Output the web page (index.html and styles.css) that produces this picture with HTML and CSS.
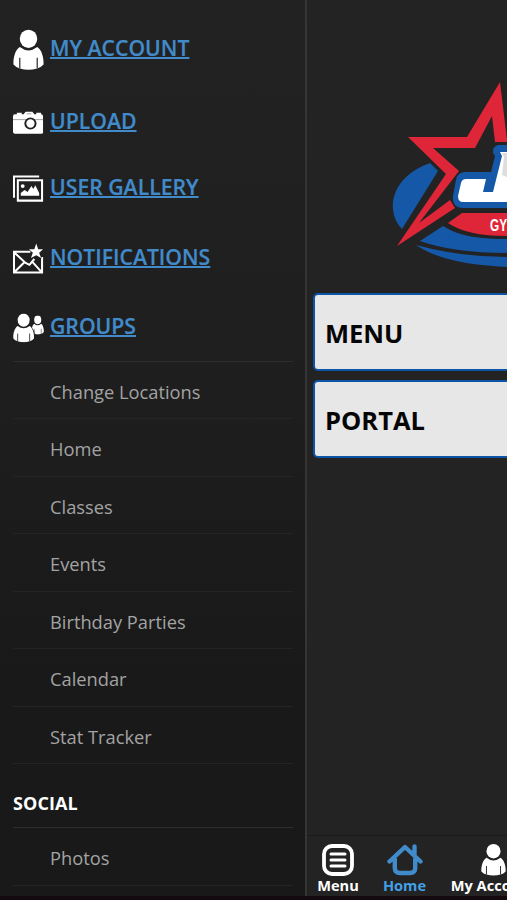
FILE: index.html
```html
<!DOCTYPE html>
<html lang="en">
<head>
<meta charset="utf-8">
<title>Menu</title>
<link rel="stylesheet" href="styles.css">
</head>
<body>
<svg class="defs" width="0" height="0">
  <symbol id="person" viewBox="0 0 32 42">
    <ellipse cx="16" cy="9.5" rx="9" ry="9.5"/>
    <path d="M7 18Q16 25 25 18C30 21 32 30 31.500 36Q29 39 25 40Q16 43 7 40Q3 39 .5 36C0 30 2 21 7 18Z"/>
    <path class="cut" d="M7 29V40M25 29V40"/>
  </symbol>
</svg>
<div class="app">
  <aside class="sidebar">
    <nav class="primary">
      <a class="item account" href="#"><svg class="icon" width="32" height="42"><use href="#person"/></svg><span>MY ACCOUNT</span></a>
      <a class="item upload" href="#"><svg class="icon" width="32" height="24" viewBox="0 0 32 24"><path d="M2 3H4V1.500H9V3H11L13 .5H20L22 3H24V1.500H29V3Q31 3 31 5V22Q31 23 29 23H2Q0 23 0 21V5Q0 3 2 3Z"/><path class="cut thin" d="M0 8.500H31M14 2.500H19"/><circle class="ring" cx="18" cy="12.500" r="5.300"/></svg><span>UPLOAD</span></a>
      <a class="item gallery" href="#"><svg class="icon" width="32" height="28" viewBox="0 0 32 28"><path class="line" d="M27 1H1V23M5 5H30V26H5Z"/><circle cx="10" cy="11" r="2"/><path d="M8 21V18L12 15L15 17L19 11L21 14L23 10L27 18V21Z"/></svg><span>USER GALLERY</span></a>
      <a class="item notes" href="#"><svg class="icon" width="32" height="32" viewBox="0 0 32 32"><path class="line" d="M18 8.500H1V30H30V14M1 9L13 20L17 22L22 16M1 30L12 19M30 30L20 19"/><path class="star" d="M24 0L26 6H31L27 9.500L29 15L24 12L18.500 15L20.500 9.500L16.500 6H22Z"/></svg><span>NOTIFICATIONS</span></a>
      <a class="item groups" href="#"><svg class="icon" width="32" height="31" viewBox="0 0 32 31"><svg x="19" y="2" width="13" height="20" viewBox="0 0 32 42" preserveAspectRatio="none"><use href="#person" width="32" height="42"/></svg><circle class="hole" cx="11" cy="8" r="8"/><path class="hole" d="M5 13H17Q23 15 23 28H5Z"/><svg x="0" y="0" width="22" height="30" viewBox="0 0 32 42" preserveAspectRatio="none"><use href="#person" width="32" height="42"/></svg></svg><span>GROUPS</span></a>
    </nav>
    <ul class="list">
      <li>Change Locations</li>
      <li>Home</li>
      <li>Classes</li>
      <li>Events</li>
      <li>Birthday Parties</li>
      <li>Calendar</li>
      <li>Stat Tracker</li>
    </ul>
    <h2>SOCIAL</h2>
    <ul class="list"><li>Photos</li></ul>
  </aside>
  <main class="page">
    <header class="brand">
      <svg width="127" height="210" viewBox="380 70 127 210">
        <path class="blue" d="M430 163L438 171L402 229C386 213 388 178 430 163Z"/>
        <path class="blue" d="M420 241L443 226C460 237 482 239 507 239V253Q454 253 420 241Z"/>
        <path class="blue" d="M416 245Q460 257 507 257V267Q443 264 416 245Z"/>
        <path class="red" d="M448 223L462 213H507V236Q467 236 448 223Z"/>
        <path class="red" d="M408 137H467L500 82L507 140V142H495L492 116L475 148H433L459 171L419 223L450 200L455 208L397 246L446 174Z"/>
        <path class="blue" d="M507 145H498Q492 147 493 153L495 156L491 172H464Q457 173 456 180L453 196Q452 208 463 208H507Z"/>
        <path class="white" d="M507 152H500L502 156L493 192H483L486 179H466Q462 179 461 183L458 196Q458 202 463 202H507Z"/>
        <path class="silver" d="M507 153H502L504 157L502 175L507 177Z"/>
        <text x="490" y="230.500" textLength="17" lengthAdjust="spacingAndGlyphs">GY</text>
      </svg>
    </header>
    <div class="buttons">
      <a href="#">MENU</a>
      <a href="#">PORTAL</a>
    </div>
    <footer class="tabs">
      <a class="tab" href="#"><svg width="32" height="32" viewBox="0 0 32 32"><rect class="frame" x="2" y="2" width="28" height="28" rx="8"/><path class="bars" d="M9 10H23M9 16H23M9 22H23"/></svg><span>Menu</span></a>
      <a class="tab active" href="#"><svg width="36" height="32" viewBox="0 0 36 32"><path class="house" d="M2.500 17.500L18 3L33.500 17.500M27.500 11V2.500M7.800 15V24Q7.800 29 13 29H23Q28.200 29 28.200 24V15"/></svg><span>Home</span></a>
      <a class="tab" href="#"><svg width="25" height="32" viewBox="0 0 32 42" preserveAspectRatio="none"><use href="#person" width="32" height="42"/></svg><span>My Account</span></a>
    </footer>
  </main>
</div>
</body>
</html>
```
FILE: styles.css
```css
* { box-sizing: border-box; }
body { margin: 0; background: #232323; font-family: "Open Sans", sans-serif; overflow: hidden; }
a { color: inherit; text-decoration: none; }
.defs { position: absolute; }
.app { display: flex; height: 900px; overflow: hidden; border-bottom: 4px solid #14090f; }
.sidebar { flex: 0 0 307px; padding: 15px 12px 0 13px; border-right: 2px solid #353535; background: linear-gradient(#222, #1e1e1e 45%, #191919 75%, #191919); overflow: hidden; }
.primary { height: 347px; border-bottom: 1px solid #2d2d2d; display: flex; flex-direction: column; }
.item { display: flex; align-items: center; gap: 6px; height: 68px; color: #428bca; font-weight: 600; font-size: 21.2px; line-height: 28px; }
.item span { margin-bottom: 4px; text-decoration: underline; text-decoration-thickness: 1.5px; text-underline-offset: 1px; text-decoration-skip-ink: none; -webkit-text-stroke: .2px #428bca; }
.icon { fill: #fff; flex: none; width: 31px; }
.account { height: 70px; }
.upload { height: 76px; }
.gallery { height: 56px; }
.notes { height: 83px; }
.groups { height: 56px; }
.cut { fill: none; stroke: #333; stroke-width: 1.3; }
.thin { stroke: #888; stroke-width: .8; }
.hole { fill: #202020; }
.ring { fill: #fff; stroke: #202020; stroke-width: 2; }
.line { fill: none; stroke: #fff; stroke-width: 2.1; }
.star { stroke: #202020; stroke-width: 1; paint-order: stroke; }
.list { list-style: none; margin: 0; padding: 0; color: #a3a3a3; font-size: 18.3px; }
.list li { height: 57.45px; padding-left: 37px; line-height: 60px; border-bottom: 1px solid #242424; }
h2 { height: 64px; margin: 0; color: #fff; font-size: 18px; font-weight: 700; line-height: 78px; letter-spacing: .1px; border-bottom: 1px solid #2d2d2d; }
.page { flex: 1; min-width: 0; display: flex; flex-direction: column; overflow: hidden; background: #232323; }
.brand { height: 293px; padding: 70px 0 0 73px; }
.brand svg { display: block; }
.blue { fill: #1558a7; }
.red { fill: #df2638; }
.white { fill: #fff; }
.silver { fill: #ddd; }
.brand text { fill: #fff; font: 700 16px "Liberation Sans", sans-serif; }
.buttons { flex: 1; display: flex; flex-direction: column; gap: 9px; padding-left: 6px; }
.buttons a { width: 380px; height: 78px; padding-left: 10px; border: 2px solid #0c55a6; border-radius: 5px; background: #e7e7e7; color: #050505; font-size: 25.5px; font-weight: 700; line-height: 76px; }
.tabs { display: flex; height: 61px; border-top: 1px solid #191919; color: #fff; }
.tab { flex: 0 0 68px; display: flex; flex-direction: column; align-items: center; padding-top: 8px; font-size: 14.6px; font-weight: 700; line-height: 18px; white-space: nowrap; }
.tab:first-child { flex-basis: 62px; }
.tab:nth-child(2) { flex-basis: 71px; }
.tab:last-child { flex-basis: 107px; }
.tab svg { flex: none; fill: #fff; }
.active { color: #42a0e6; }
.tabs .frame, .tabs .bars, .tabs .house { fill: none; stroke: #fff; stroke-width: 3.8; stroke-linecap: round; stroke-linejoin: round; }
.tabs .bars { stroke-width: 3; }
.tabs .house { stroke: #428bca; stroke-width: 4.4; }
```
